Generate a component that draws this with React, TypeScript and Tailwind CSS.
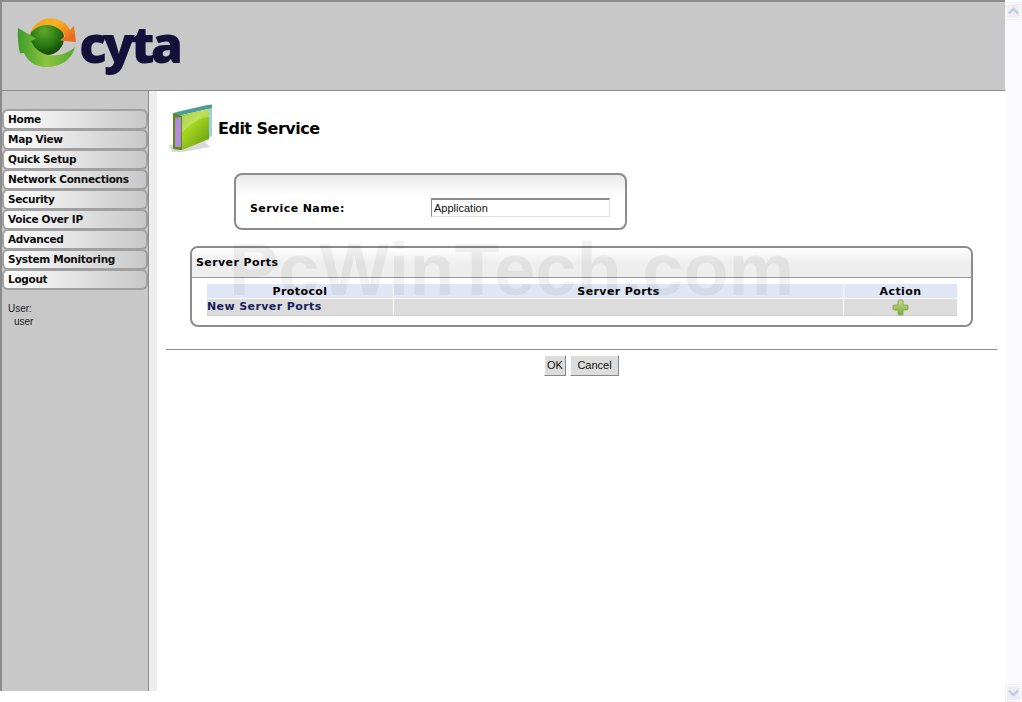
const menu = [
  "Home",
  "Map View",
  "Quick Setup",
  "Network Connections",
  "Security",
  "Voice Over IP",
  "Advanced",
  "System Monitoring",
  "Logout",
];

function CytaMark() {
  return (
    <svg width="62" height="54" viewBox="16 16 62 54" className="shrink-0">
      <defs>
        <radialGradient id="ball" cx="0.42" cy="0.3" r="0.75">
          <stop offset="0" stopColor="#5fa82c" />
          <stop offset="0.55" stopColor="#2a7a12" />
          <stop offset="1" stopColor="#123f08" />
        </radialGradient>
        <linearGradient id="sweep" x1="0" y1="0" x2="1" y2="0">
          <stop offset="0" stopColor="#3f9b2a" />
          <stop offset="0.5" stopColor="#8cc63f" />
          <stop offset="1" stopColor="#55a82e" />
        </linearGradient>
        <linearGradient id="flame" x1="0" y1="0" x2="1" y2="0.7">
          <stop offset="0" stopColor="#e8a020" />
          <stop offset="0.5" stopColor="#fbb21f" />
          <stop offset="1" stopColor="#ea6a1e" />
        </linearGradient>
      </defs>
      <circle cx="47" cy="38" r="17" fill="url(#ball)" />
      <path
        d="M29 35C33 24 42 18 51 18.500C60 19 67 23 70 30L74 25.500L76 42L60 40.500L65 36C61 29 55 25 47 25C39 25 33 29 29 35Z"
        fill="url(#flame)"
      />
      <path
        d="M18 28L36 38.500L31 41C35 50 44 56 54 55.500C62 55 70 52 75 47C72 60 60 67 47 67C34 67 27 60 24 53L20 53.500C18 45 17.500 36 18 28Z"
        fill="url(#sweep)"
      />
    </svg>
  );
}

function FolderIcon() {
  return (
    <svg width="46" height="50" viewBox="0 0 46 50" className="shrink-0">
      <defs>
        <linearGradient id="front" x1="0" y1="0" x2="1" y2="1">
          <stop offset="0" stopColor="#7fb81c" />
          <stop offset="0.45" stopColor="#a8d820" />
          <stop offset="1" stopColor="#5f9410" />
        </linearGradient>
      </defs>
      <path d="M1 42L36 38L42 44L14 49L4 49Z" fill="#c9c9c9" opacity="0.7" />
      <path d="M7 9L44 1V33L40 35V6Z" fill="#9fd2d8" />
      <path d="M5 10L40 2L44 2V5L10 13Z" fill="#4f9b9b" />
      <path d="M5 10L10 13L41 6V36L36 38L14 47L5 46Z" fill="url(#front)" />
      <path d="M5 10L14 13V47L5 46Z" fill="#5c8a12" />
      <path d="M7 15L13 14V44L7 44Z" fill="#b58be0" />
      <path d="M14 13L41 6V14C32 15 22 20 14 30Z" fill="#ffffff" opacity="0.25" />
    </svg>
  );
}

function PlusIcon() {
  return (
    <svg width="17" height="17" viewBox="0 0 17 17">
      <defs>
        <linearGradient id="plus" x1="0" y1="0" x2="0" y2="1">
          <stop offset="0" stopColor="#c5dc8e" />
          <stop offset="1" stopColor="#7fae35" />
        </linearGradient>
      </defs>
      <path
        d="M7 1H10C10.800 1 11 1.500 11 2V6H15C15.600 6 16 6.400 16 7V10C16 10.600 15.600 11 15 11H11V15C11 15.600 10.600 16 10 16H7C6.400 16 6 15.600 6 15V11H2C1.400 11 1 10.600 1 10V7C1 6.400 1.400 6 2 6H6V2C6 1.500 6.400 1 7 1Z"
        fill="url(#plus)"
        stroke="#7d9f45"
        strokeWidth="0.8"
      />
    </svg>
  );
}

function ScrollButton({ up }: { up?: boolean }) {
  return (
    <div className="w-[15px] h-[16px] bg-[#eeeeee] border border-white shadow-[0_0_1px_#bbbbbb] flex items-center justify-center">
      <svg width="11" height="8" viewBox="0 0 11 8">
        <path
          d={up ? "M1 6.500L5.500 2L10 6.500" : "M1 1.500L5.500 6L10 1.500"}
          fill="none"
          stroke="#b7cce8"
          strokeWidth="2.400"
        />
      </svg>
    </div>
  );
}

export default function App() {
  const verdana = "font-['DejaVu_Sans',sans-serif]";
  const arial = "font-['Liberation_Sans',sans-serif]";

  return (
    <div className="relative w-[1022px] h-[702px] overflow-hidden bg-white flex">
      <div className="w-[1005px] h-full flex flex-col">
        <header className="h-[91px] shrink-0 bg-[#c8c8c8] border-t-2 border-l-2 border-b border-[#8c8c8c] flex items-start pl-[14px] pt-[14px]">
          <CytaMark />
          <span className="font-['Open_Sans',sans-serif] font-extrabold text-[52px] leading-[60px] tracking-[-4px] text-[#14103a] ml-[1px] mt-[-3px]">
            cyta
          </span>
        </header>

        <div className="h-[600px] shrink-0 flex">
          <aside className="w-[149px] shrink-0 bg-[#c8c8c8] border-l-2 border-r border-[#8c8c8c] pt-[18px]">
            <nav className="flex flex-col">
              {menu.map((item, i) => (
                <a
                  key={item}
                  className={`h-[21px] flex items-center pl-[4px] border-2 border-[#a0a0a0] rounded-[6px] bg-gradient-to-r from-white to-[#c8c8c8] text-[10.5px] tracking-[-0.3px] font-bold text-[#0c0c0c] ${i > 0 ? "-mt-[1px]" : ""} ${verdana}`}
                >
                  {item}
                </a>
              ))}
            </nav>
            <div className={`mt-[12px] pl-[6px] text-[10px] leading-[13px] text-[#222222] ${arial}`}>
              <div>User:</div>
              <div className="pl-[6px]">user</div>
            </div>
          </aside>
          <div className="w-[8px] shrink-0 bg-[#eeeeee]" />

          <main className="flex-1 pl-[9px] pr-[8px] pt-[12px]">
            <div className="flex items-center h-[50px] pl-[2px]">
              <FolderIcon />
              <h1 className={`ml-[4px] mt-[2px] text-[16px] tracking-[-0.5px] font-bold text-black ${verdana}`}>Edit Service</h1>
            </div>

            <div className="mt-[20px] ml-[68px] w-[393px] h-[57px] border-2 border-[#8c8c8c] rounded-[8px] bg-gradient-to-b from-[#e9e9e9] via-white via-40% to-white flex items-center pl-[14px] pt-[14px]">
              <label className={`w-[181px] mt-[2px] text-[11px] tracking-[0.4px] font-bold text-black ${verdana}`}>Service Name:</label>
              <input
                readOnly
                value="Application"
                className={`w-[179px] h-[19px] mt-[-2px] px-[2px] bg-white border border-[#e0e0e0] border-t-[#8c8c8c] border-l-[#8c8c8c] border-t-2 text-[11px] text-[#111111] outline-none ${arial}`}
              />
            </div>

            <section className="mt-[16px] ml-[24px] w-[783px] h-[81px] border-2 border-[#8c8c8c] rounded-[8px] overflow-hidden">
              <div className={`h-[30px] pt-[2px] bg-gradient-to-b from-white to-[#eeeeee] to-50% border-b border-[#999999] flex items-center pl-[4px] text-[11px] tracking-[0.4px] font-bold text-black ${verdana}`}>
                Server Ports
              </div>
              <div className={`mt-[6px] ml-[15px] w-[750px] grid grid-cols-[187px_450px_113px] text-[11px] tracking-[0.4px] font-bold ${verdana}`}>
                <div className="h-[14px] pt-[1px] bg-[#e0e6f5] border-r border-white text-center leading-[14px] text-black">Protocol</div>
                <div className="h-[14px] pt-[1px] bg-[#e0e6f5] border-r border-white text-center leading-[14px] text-black">Server Ports</div>
                <div className="h-[14px] pt-[1px] bg-[#e0e6f5] text-center leading-[14px] text-black">Action</div>
                <div className="h-[17px] mt-[1px] pt-[1px] bg-[#dcdcdc] border-r border-white border-b border-b-[#cccccc] leading-[14px] text-[#14225f]">New Server Ports</div>
                <div className="h-[17px] mt-[1px] bg-[#dcdcdc] border-r border-white border-b border-b-[#cccccc]" />
                <div className="h-[17px] mt-[1px] bg-[#dcdcdc] border-b border-[#cccccc] flex justify-center">
                  <PlusIcon />
                </div>
              </div>
            </section>

            <hr className="mt-[22px] border-t border-[#8c8c8c]" />

            <div className="mt-[5px] flex justify-center gap-[4px]">
              <button className={`w-[22px] h-[21px] bg-[#dcdcdc] border border-t-white border-l-white border-r-[#888888] border-b-[#888888] text-[11px] text-[#111111] ${arial}`}>OK</button>
              <button className={`w-[49px] h-[21px] bg-[#dcdcdc] border border-t-white border-l-white border-r-[#888888] border-b-[#888888] text-[11px] text-[#111111] ${arial}`}>Cancel</button>
            </div>
          </main>
        </div>
      </div>

      <div className="w-[17px] h-full bg-[#fbfbff] flex flex-col items-center justify-between pt-[3px] pb-[1px]">
        <ScrollButton up />
        <ScrollButton />
      </div>

      <div className="absolute left-[229px] top-[230px] font-['Liberation_Sans',sans-serif] font-bold text-[74px] leading-[80px] text-black/[0.05] pointer-events-none whitespace-nowrap">
        PcWinTech.com
      </div>
    </div>
  );
}
